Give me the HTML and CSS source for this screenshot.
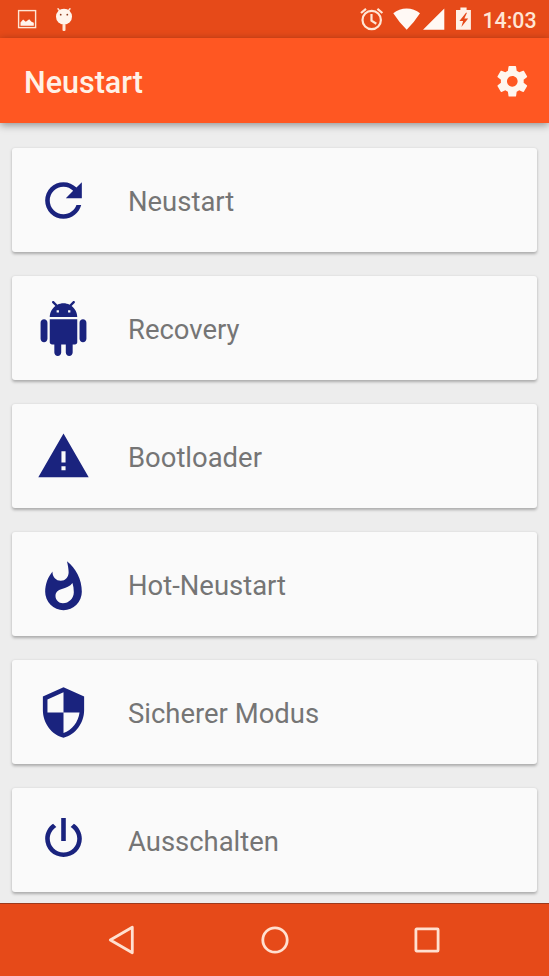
FILE: index.html
```html
<!DOCTYPE html>
<html lang="de">
<head>
<meta charset="utf-8">
<title>Neustart</title>
<link rel="stylesheet" href="styles.css">
</head>
<body>
<div class="screen">
  <div class="status">
    <svg class="status-left" width="80" height="38" viewBox="0 0 80 38">
      <rect x="18.6" y="10.6" width="17" height="17" fill="none" stroke="#ffe6d5" stroke-width="1.4"/>
      <path fill="#fff4ec" d="M20.5 25.8v-3.4l2.6-3 2.7 2.3 3.4-2.5 2.3 2.5 2.3 1v3.1z"/>
      <path fill="none" stroke="#ffe6d5" stroke-width="1.5" stroke-linecap="round" d="M58 8.8l2.4 3M70 8.8l-2.4 3"/>
      <circle cx="64" cy="16.7" r="8" fill="#fff4ec"/>
      <rect x="62.5" y="24" width="3" height="7" rx="1" fill="#ffe6d5"/>
      <circle cx="60.7" cy="14.7" r=".9" fill="#8d3b1c"/><circle cx="67.3" cy="14.7" r=".9" fill="#8d3b1c"/>
    </svg>
    <div class="status-right">
      <svg width="120" height="38" viewBox="0 0 120 38">
        <g fill="none" stroke="#ffe6d5" stroke-width="2.2">
          <circle cx="16.7" cy="20" r="9.2"/>
          <path d="M16.5 14v6.7l4.8 3M6 13l5-4.2M27.4 13l-5-4.2"/>
        </g>
        <path fill="#fff9f5" d="M38.3 13.3C45.500 7 57.800 7 65 13.300Q59.500 22 51.700 29.700Q43.700 22 38.300 13.300zM89.300 8.500V29.700H68z"/>
        <path fill="#fff1e6" fill-rule="evenodd" d="M102 10h3.400V7.600h6.200V10h4.300v19.700h-14.900V10zM111 12.700l-6.600 8.200h3.700l-1.700 6.200 6.800-8.600h-3.900l2.700-5.800z"/>
      </svg>
      <span class="clock">14:03</span>
    </div>
  </div>
  <header class="appbar">
    <h1>Neustart</h1>
    <svg class="gear" viewBox="0 0 24 24"><path d="M19.430 12.980c.04-.32.07-.64.07-.98s-.03-.66-.07-.98l2.110-1.650c.19-.15.24-.42.12-.64l-2-3.460c-.12-.22-.39-.3-.61-.22l-2.490 1c-.52-.4-1.080-.73-1.690-.98l-.38-2.650C14.460 2.180 14.250 2 14 2h-4c-.25 0-.46.18-.49.42l-.38 2.650c-.61.25-1.170.59-1.690.98l-2.490-1c-.23-.09-.49 0-.61.22l-2 3.460c-.13.22-.07.49.12.64l2.110 1.650c-.04.32-.07.65-.07.98s.03.66.07.98l-2.110 1.650c-.19.15-.24.42-.12.64l2 3.460c.12.22.39.3.61.22l2.490-1c.52.4 1.080.73 1.690.98l.38 2.650c.03.24.24.42.49.42h4c.25 0 .46-.18.49-.42l.38-2.650c.61-.25 1.170-.59 1.690-.98l2.490 1c.23.09.49 0 .61-.22l2-3.460c.12-.22.07-.49-.12-.64l-2.110-1.650zM12 15.500c-1.930 0-3.500-1.570-3.500-3.500s1.570-3.500 3.500-3.500 3.500 1.570 3.500 3.500-1.570 3.500-3.500 3.500z"/></svg>
  </header>
  <main class="list">
    <div class="card">
      <svg class="icon" viewBox="0 0 24 24"><path d="M17.65,6.35C16.2,4.9 14.21,4 12,4A8,8 0 0,0 4,12A8,8 0 0,0 12,20C15.73,20 18.84,17.45 19.73,14H17.65C16.83,16.33 14.61,18 12,18A6,6 0 0,1 6,12A6,6 0 0,1 12,6C13.66,6 15.14,6.69 16.22,7.78L13,11H20V4L17.65,6.35Z"/></svg>
      <span>Neustart</span>
    </div>
    <div class="card">
      <svg class="icon" viewBox="0 0 24 24"><path d="M6 18c0 .55.45 1 1 1h1v3.500c0 .83.67 1.500 1.500 1.500s1.500-.67 1.500-1.500V19h2v3.500c0 .83.67 1.500 1.500 1.500s1.500-.67 1.500-1.500V19h1c.55 0 1-.45 1-1V8H6v10zM3.500 8C2.670 8 2 8.670 2 9.500v7c0 .83.67 1.500 1.500 1.500S5 17.330 5 16.500v-7C5 8.670 4.330 8 3.500 8zm17 0c-.83 0-1.500.67-1.500 1.500v7c0 .83.67 1.500 1.500 1.500s1.500-.67 1.500-1.500v-7c0-.83-.67-1.500-1.500-1.500zm-4.970-5.840l1.300-1.300c.2-.2.2-.51 0-.71-.2-.2-.51-.2-.71 0l-1.480 1.480C13.850 1.230 12.950 1 12 1c-.96 0-1.860.23-2.660.63L7.850.15c-.2-.2-.51-.2-.71 0-.2.2-.2.51 0 .71l1.310 1.310C6.970 3.260 6 5.010 6 7h12c0-1.990-.97-3.750-2.470-4.840zM10 5H9V4h1v1zm5 0h-1V4h1v1z"/></svg>
      <span>Recovery</span>
    </div>
    <div class="card">
      <svg class="icon" viewBox="0 0 24 24"><path d="M1 21h22L12 2 1 21zM12.9 18h-1.800v-1.800h1.800zM12.9 14.600h-1.800v-4.900h1.800z" fill-rule="evenodd"/></svg>
      <span>Bootloader</span>
    </div>
    <div class="card">
      <svg class="icon" viewBox="0 -1.2 24 24"><path d="M11.71,19C9.93,19 8.5,17.59 8.5,15.86C8.5,14.24 9.53,13.1 11.3,12.74C13.07,12.38 14.9,11.53 15.92,10.16C16.31,11.45 16.5,12.81 16.5,14.2C16.5,16.84 14.36,19 11.71,19M13.5,0.67C13.5,0.67 14.24,3.32 14.24,5.47C14.24,7.53 12.89,9.2 10.83,9.2C8.76,9.2 7.2,7.53 7.2,5.47L7.23,5.1C5.21,7.5 4,10.61 4,14A8,8 0 0,0 12,22A8,8 0 0,0 20,14C20,8.6 17.41,3.8 13.5,0.67Z" fill-rule="evenodd"/></svg>
      <span>Hot-Neustart</span>
    </div>
    <div class="card">
      <svg class="icon" viewBox="0 0 24 24"><path d="M12 1L3 5v6c0 5.550 3.840 10.740 9 12 5.160-1.260 9-6.450 9-12V5l-9-4zm0 10.990h7c-.53 4.120-3.280 7.790-7 8.940V12H5V6.300l7-3.110v8.800z"/></svg>
      <span>Sicherer Modus</span>
    </div>
    <div class="card">
      <svg class="icon" viewBox="0 .8 24 24"><path d="M16.56,5.44L15.11,6.89C16.84,7.94 18,9.83 18,12A6,6 0 0,1 12,18A6,6 0 0,1 6,12C6,9.83 7.16,7.94 8.88,6.88L7.44,5.44C5.36,6.88 4,9.28 4,12A8,8 0 0,0 12,20A8,8 0 0,0 20,12C20,9.28 18.64,6.88 16.56,5.44M13,3H11V13H13"/></svg>
      <span>Ausschalten</span>
    </div>
  </main>
  <nav class="navbar">
    <svg viewBox="0 0 32 32"><path d="M4.300 16L26.300 3.200V28.800z"/></svg>
    <svg viewBox="0 0 32 32"><circle cx="16" cy="16" r="12.200"/></svg>
    <svg viewBox="0 0 32 32"><rect x="4.900" y="4.900" width="22.200" height="22.200" rx=".8"/></svg>
  </nav>
</div>
</body>
</html>
```
FILE: styles.css
```css
* { box-sizing: border-box; }
body {
  margin: 0;
  font-family: Roboto, "Liberation Sans", sans-serif;
  background: #ededed;
}
.screen {
  width: 549px;
  height: 976px;
  display: flex;
  flex-direction: column;
  overflow: hidden;
}
.status {
  height: 38px;
  flex: none;
  display: flex;
  justify-content: space-between;
  background: #e64a19;
}
.status svg { display: block; }
.status-right {
  display: flex;
  align-items: center;
  width: 194px;
}
.status-right svg { flex: none; }
.clock {
  margin: 3px 0 0 7.5px;
  color: #ffe6d5;
  font-size: 21.3px;
  font-weight: 500;
  line-height: 24px;
}
.appbar {
  height: 85px;
  flex: none;
  display: flex;
  align-items: center;
  justify-content: space-between;
  padding: 0 18.7px 0 24px;
  background: #ff5722;
  box-shadow: 0 2px 8px rgba(0, 0, 0, .4);
}
h1 {
  margin: 4px 0 0;
  color: #fff1e6;
  font-size: 30.5px;
  font-weight: 500;
  line-height: 36px;
}
.gear {
  width: 36.6px;
  height: 36.6px;
  margin-top: 1px;
  fill: #fff6ef;
}
.list {
  flex: 1;
  min-height: 0;
  display: flex;
  flex-direction: column;
  gap: 24px;
  padding: 25px 12px 0;
}
.card {
  height: 104px;
  flex: none;
  display: flex;
  align-items: center;
  gap: 37px;
  padding-left: 24px;
  border-radius: 3px;
  background: #fafafa;
  box-shadow: 0 1.5px 3px rgba(0, 0, 0, .28);
}
.icon {
  width: 55px;
  height: 55px;
  margin-top: 1px;
  flex: none;
  fill: #1a237e;
}
.card span {
  margin-top: 4px;
  color: #757575;
  font-size: 27.45px;
  line-height: 32px;
}
.navbar {
  height: 73px;
  flex: none;
  display: flex;
  align-items: center;
  justify-content: center;
  gap: 120.5px;
  padding-bottom: 1px;
  background: #e64a19;
  border-top: 1px solid #9c3a1d;
  position: relative;
}
.navbar svg {
  width: 32px;
  height: 32px;
  fill: none;
  stroke: #ffe0d0;
  stroke-width: 2.8;
  stroke-linejoin: round;
}
```
